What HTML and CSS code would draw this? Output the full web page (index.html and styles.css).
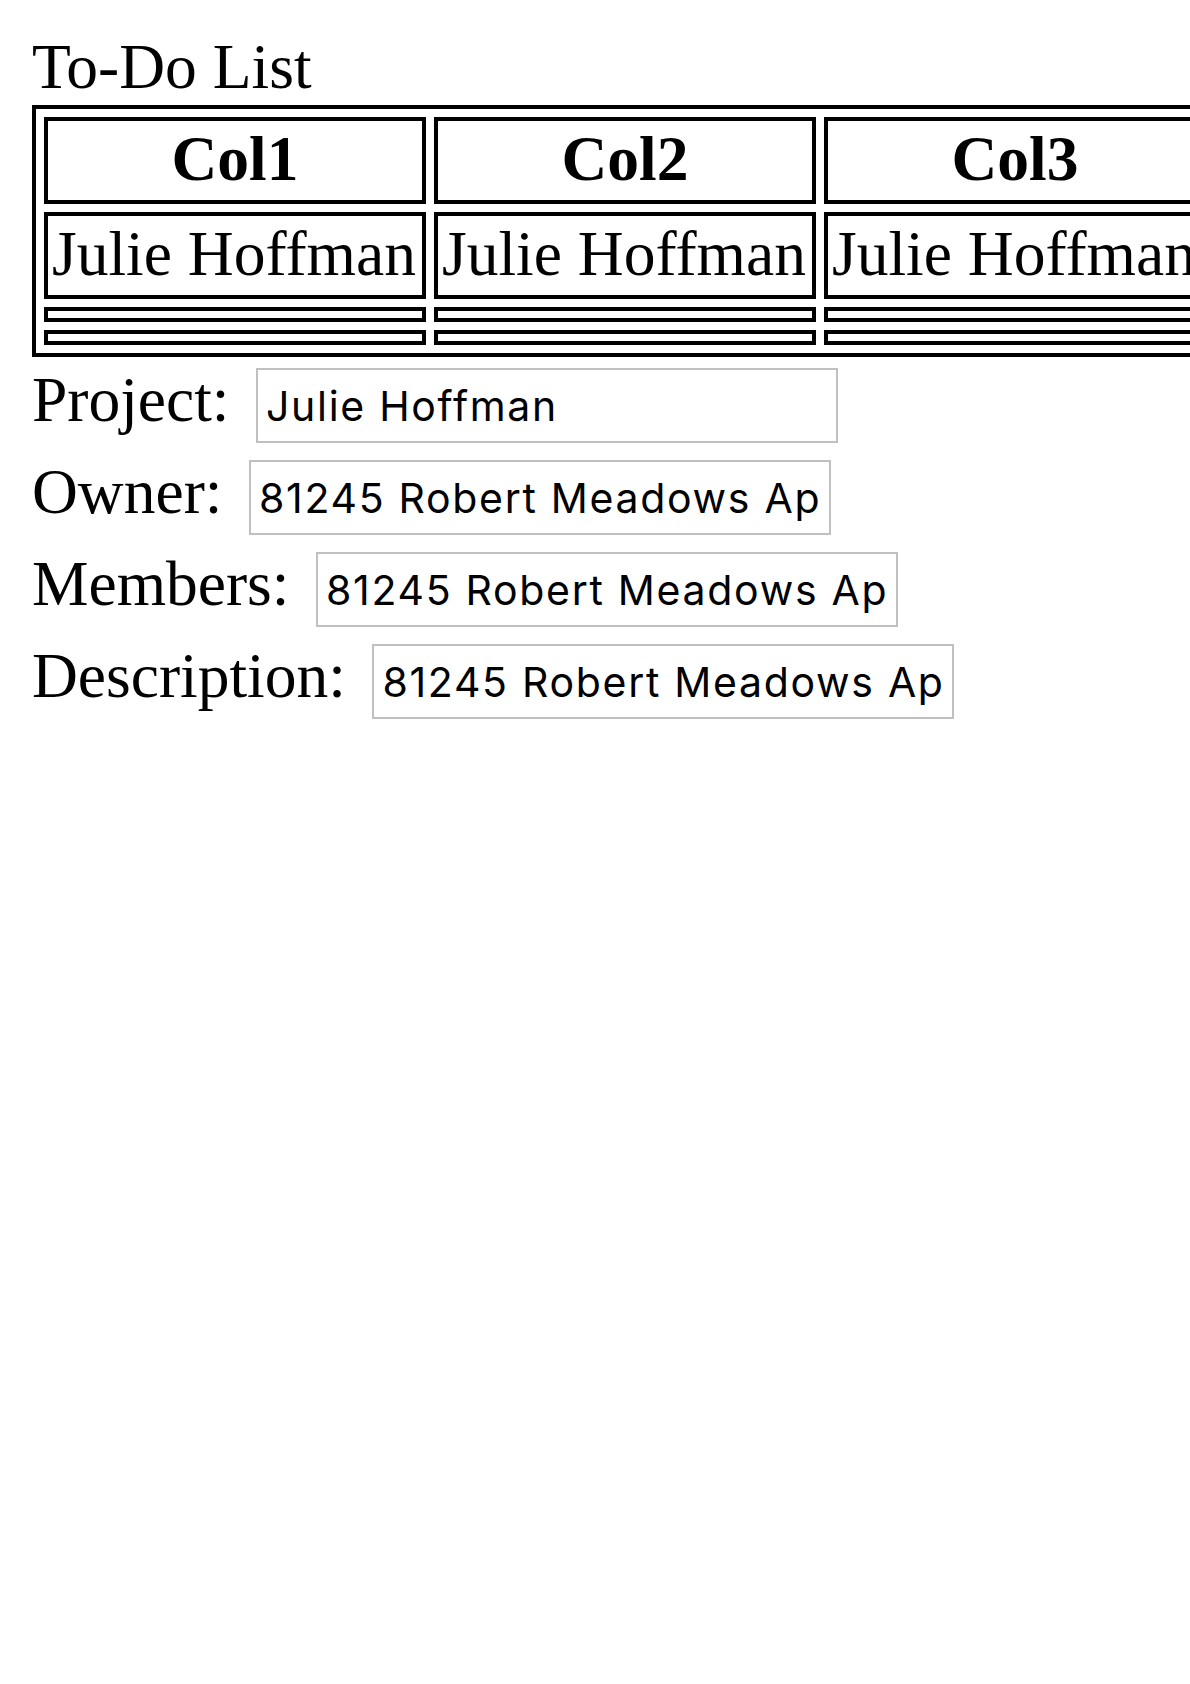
FILE: index.html
```html
<!DOCTYPE html>
<html>
<head>
<meta charset="utf-8">
<title>To-Do List</title>
<link rel="stylesheet" href="styles.css">
</head>
<body>
<div class="page">
  <div class="title">To-Do List</div>
  <table class="grid">
    <tr>
      <th>Col1</th>
      <th>Col2</th>
      <th>Col3</th>
    </tr>
    <tr>
      <td>Julie Hoffman</td>
      <td>Julie Hoffman</td>
      <td>Julie Hoffman</td>
    </tr>
    <tr class="empty">
      <td></td>
      <td></td>
      <td></td>
    </tr>
    <tr class="empty">
      <td></td>
      <td></td>
      <td></td>
    </tr>
  </table>
  <form class="form">
    <div class="row">
      <label for="project">Project:</label>
      <input id="project" type="text" value="Julie Hoffman">
    </div>
    <div class="row">
      <label for="owner">Owner:</label>
      <input id="owner" type="text" value="81245 Robert Meadows Apt. 179">
    </div>
    <div class="row">
      <label for="members">Members:</label>
      <input id="members" type="text" value="81245 Robert Meadows Apt. 179">
    </div>
    <div class="row">
      <label for="description">Description:</label>
      <input id="description" type="text" value="81245 Robert Meadows Apt. 179">
    </div>
  </form>
</div>
</body>
</html>
```
FILE: styles.css
```css
html {
  background: #ffffff;
}

body {
  margin: 32px 0 32px 32px;
  font-family: "Liberation Serif", "Times New Roman", serif;
  font-size: 63.5px;
  color: #000000;
}

.page {
  overflow: hidden;
}

.title {
  line-height: 70px;
  padding-bottom: 3px;
}

.grid {
  table-layout: fixed;
  width: 1186px;
  border: 4px solid #000000;
  border-spacing: 8px 8.5px;
  font-size: 63.5px;
}

.grid th,
.grid td {
  border: 4px solid #000000;
  padding: 3px 4px 7px;
  line-height: 69px;
  white-space: nowrap;
  overflow: hidden;
}

.grid th {
  font-weight: bold;
  text-align: center;
}

.grid td {
  text-align: left;
}

.grid .empty td {
  padding: 3.5px 4px;
  line-height: 0;
  height: 0;
}

.form {
  margin: 0;
}

.row {
  display: flex;
  align-items: baseline;
  column-gap: 26.5px;
  height: 92px;
  box-sizing: border-box;
  padding-top: 7.5px;
}

.row label {
  line-height: 70px;
  white-space: nowrap;
}

.row input {
  box-sizing: border-box;
  flex: none;
  width: 582px;
  height: 75px;
  margin: 0;
  border: 2px solid #c0c0c0;
  border-radius: 0;
  padding: 1px 8px 0;
  font-family: Inter, "Noto Sans", sans-serif;
  font-size: 41px;
  letter-spacing: 1.7px;
  color: #000000;
  background: #ffffff;
  outline: none;
}
```
